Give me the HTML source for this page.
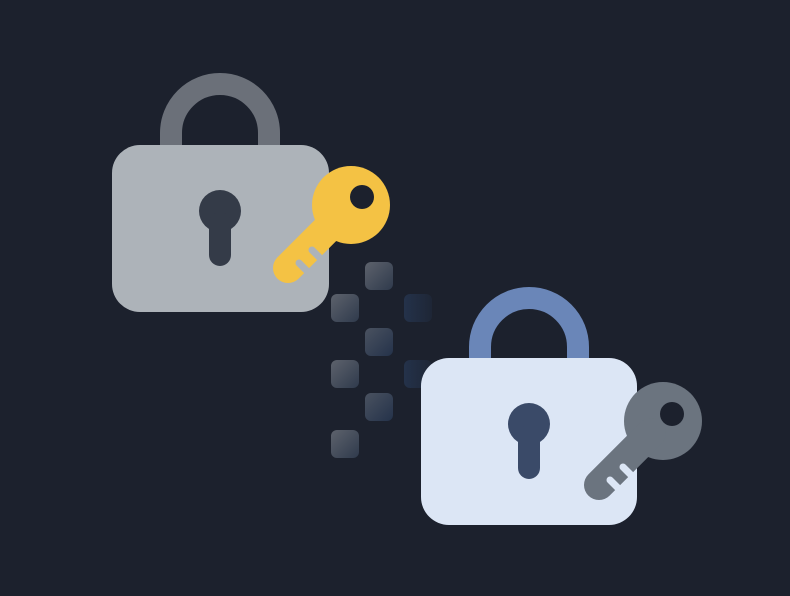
<!DOCTYPE html>
<html><head><meta charset="utf-8"><style>html,body{margin:0;padding:0;background:#1c212d;}svg{display:block}</style></head>
<body>
<svg width="790" height="596" viewBox="0 0 790 596" xmlns="http://www.w3.org/2000/svg">
<defs>
<linearGradient id="sq" x1="0" y1="0" x2="1" y2="1">
<stop offset="0" stop-color="#5d626c"/><stop offset="1" stop-color="#2f3a4c"/></linearGradient>
<linearGradient id="sq2" x1="0" y1="0" x2="1" y2="1">
<stop offset="0" stop-color="#4a5260"/><stop offset="1" stop-color="#24324a"/></linearGradient>
<linearGradient id="sq3" x1="0" y1="0" x2="1" y2="0">
<stop offset="0" stop-color="#24324a"/><stop offset="1" stop-color="#1e2636"/></linearGradient>
<mask id="m1" maskUnits="userSpaceOnUse" x="0" y="0" width="790" height="596"><rect width="790" height="596" fill="#fff"/><circle cx="362" cy="197" r="12" fill="#000"/>
<line x1="299" y1="263" x2="312" y2="276" stroke="#000" stroke-width="7" stroke-linecap="round"/>
<line x1="312" y1="250" x2="325" y2="263" stroke="#000" stroke-width="7" stroke-linecap="round"/></mask>
<mask id="m2" maskUnits="userSpaceOnUse" x="0" y="0" width="790" height="596"><rect width="790" height="596" fill="#fff"/><circle cx="672" cy="414" r="12" fill="#000"/>
<line x1="610" y1="480" x2="623" y2="493" stroke="#000" stroke-width="7" stroke-linecap="round"/>
<line x1="623" y1="467" x2="636" y2="480" stroke="#000" stroke-width="7" stroke-linecap="round"/></mask>
</defs>
<rect width="790" height="596" fill="#1c212d"/>
<rect x="365" y="262" width="28" height="28" rx="6" fill="url(#sq)"/>
<rect x="331" y="294" width="28" height="28" rx="6" fill="url(#sq)"/>
<rect x="404" y="294" width="28" height="28" rx="6" fill="url(#sq3)"/>
<rect x="365" y="328" width="28" height="28" rx="6" fill="url(#sq2)"/>
<rect x="331" y="360" width="28" height="28" rx="6" fill="url(#sq)"/>
<rect x="404" y="360" width="28" height="28" rx="6" fill="url(#sq3)"/>
<rect x="365" y="393" width="28" height="28" rx="6" fill="url(#sq2)"/>
<rect x="331" y="430" width="28" height="28" rx="6" fill="url(#sq)"/>
<path d="M171 150 V133 A49 49 0 0 1 269 133 V150" fill="none" stroke="#6b7079" stroke-width="22"/>
<rect x="112" y="145" width="217" height="167" rx="28" fill="#adb3b9"/>
<circle cx="220" cy="211" r="21" fill="#343b48"/>
<rect x="209" y="212" width="22" height="54" rx="11" fill="#343b48"/>
<g mask="url(#m1)" fill="#f4c244">
<circle cx="351" cy="205" r="39"/>
<line x1="340" y1="216" x2="288" y2="268" stroke="#f4c244" stroke-width="30" stroke-linecap="round"/>
</g>
<path d="M480 363 V347 A49 49 0 0 1 578 347 V363" fill="none" stroke="#6a86b8" stroke-width="22"/>
<rect x="421" y="358" width="216" height="167" rx="28" fill="#dce6f5"/>
<circle cx="529" cy="424" r="21" fill="#3a4a68"/>
<rect x="518" y="425" width="22" height="54" rx="11" fill="#3a4a68"/>
<g mask="url(#m2)" fill="#6b747f">
<circle cx="663" cy="421" r="39"/>
<line x1="651" y1="433" x2="599" y2="485" stroke="#6b747f" stroke-width="30" stroke-linecap="round"/>
</g>
</svg>
</body></html>
